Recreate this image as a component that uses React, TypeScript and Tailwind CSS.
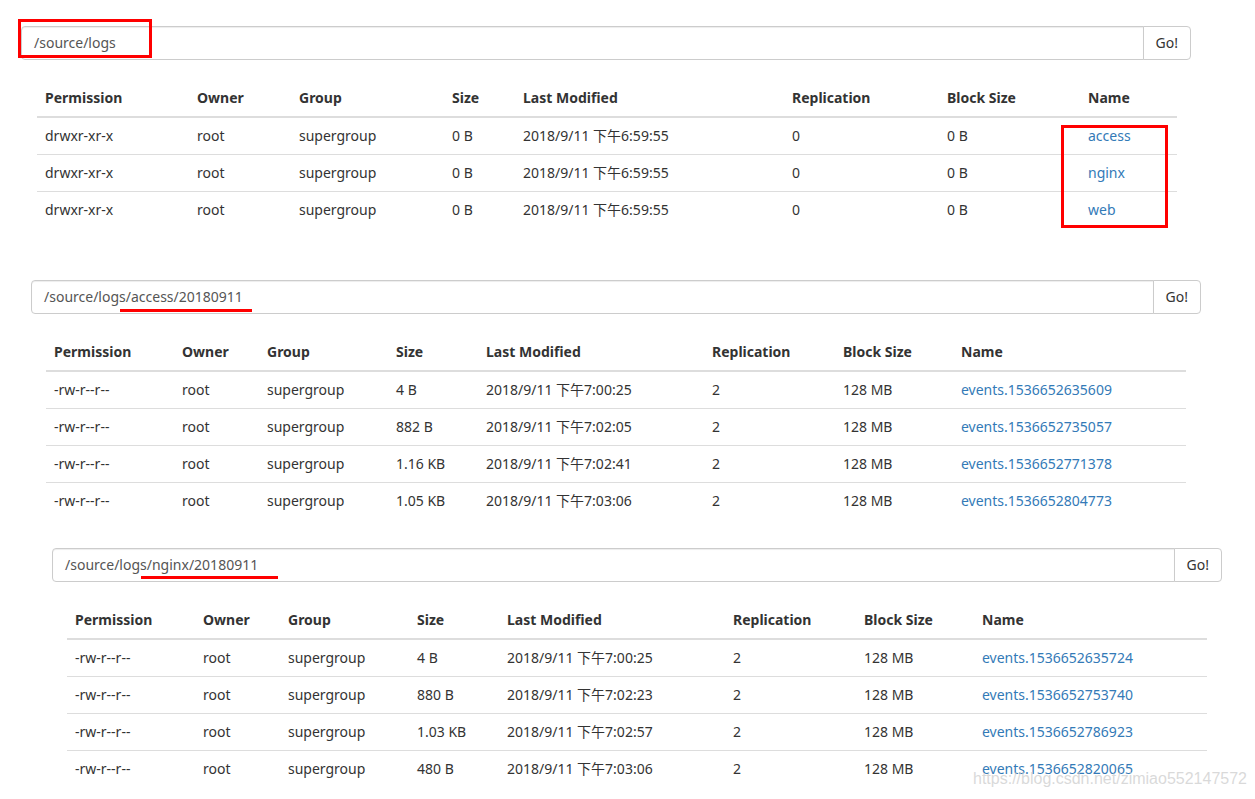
import React from "react";

type Row = string[];

const headers = ["Permission", "Owner", "Group", "Size", "Last Modified", "Replication", "Block Size", "Name"];

const w1 = [152, 102, 153, 71, 269, 155, 141, 97];
const w2 = [128, 85, 129, 90, 226, 131, 118, 233];

const rows1: Row[] = [
  ["drwxr-xr-x", "root", "supergroup", "0 B", "2018/9/11 下午6:59:55", "0", "0 B", "access"],
  ["drwxr-xr-x", "root", "supergroup", "0 B", "2018/9/11 下午6:59:55", "0", "0 B", "nginx"],
  ["drwxr-xr-x", "root", "supergroup", "0 B", "2018/9/11 下午6:59:55", "0", "0 B", "web"],
];

const rows2: Row[] = [
  ["-rw-r--r--", "root", "supergroup", "4 B", "2018/9/11 下午7:00:25", "2", "128 MB", "events.1536652635609"],
  ["-rw-r--r--", "root", "supergroup", "882 B", "2018/9/11 下午7:02:05", "2", "128 MB", "events.1536652735057"],
  ["-rw-r--r--", "root", "supergroup", "1.16 KB", "2018/9/11 下午7:02:41", "2", "128 MB", "events.1536652771378"],
  ["-rw-r--r--", "root", "supergroup", "1.05 KB", "2018/9/11 下午7:03:06", "2", "128 MB", "events.1536652804773"],
];

const rows3: Row[] = [
  ["-rw-r--r--", "root", "supergroup", "4 B", "2018/9/11 下午7:00:25", "2", "128 MB", "events.1536652635724"],
  ["-rw-r--r--", "root", "supergroup", "880 B", "2018/9/11 下午7:02:23", "2", "128 MB", "events.1536652753740"],
  ["-rw-r--r--", "root", "supergroup", "1.03 KB", "2018/9/11 下午7:02:57", "2", "128 MB", "events.1536652786923"],
  ["-rw-r--r--", "root", "supergroup", "480 B", "2018/9/11 下午7:03:06", "2", "128 MB", "events.1536652820065"],
];

function InputGroup({ value }: { value: string }) {
  return (
    <div className="flex h-[34px] w-[1170px]">
      <div className="flex-1 flex items-center border border-[#ccc] rounded-l-[4px] px-[12px] text-[14px] leading-[20px] text-[#555] shadow-[inset_0_1px_1px_rgba(0,0,0,0.075)] bg-white">
        {value}
      </div>
      <div className="-ml-px flex items-center border border-[#ccc] rounded-r-[4px] px-[12px] text-[14px] leading-[20px] text-[#333] bg-white">
        Go!
      </div>
    </div>
  );
}

function Table({ widths, rows }: { widths: number[]; rows: Row[] }) {
  return (
    <table className="table-fixed border-collapse w-[1140px] text-[14px] leading-[20px] text-[#333]">
      <colgroup>
        {widths.map((w, i) => (
          <col key={i} style={{ width: w }} />
        ))}
      </colgroup>
      <thead>
        <tr>
          {headers.map((h) => (
            <th key={h} className="text-left font-bold px-[8px] pt-[8px] pb-[8px] border-b-2 border-[#ddd] align-bottom whitespace-nowrap">
              {h}
            </th>
          ))}
        </tr>
      </thead>
      <tbody>
        {rows.map((r, ri) => (
          <tr key={ri}>
            {r.map((c, ci) => (
              <td
                key={ci}
                className={
                  "px-[8px] pt-[8px] pb-[8px] align-top whitespace-nowrap font-normal " +
                  (ri > 0 ? "border-t border-[#ddd] " : "") +
                  (ci === 7 ? "text-[#337ab7]" : "")
                }
              >
                {c}
              </td>
            ))}
          </tr>
        ))}
      </tbody>
    </table>
  );
}

export default function App() {
  return (
    <div
      className="relative w-[1255px] h-[799px] overflow-hidden bg-white"
      style={{ fontFamily: '"Noto Sans", "Noto Sans CJK SC", sans-serif' }}
    >
      <div className="flex flex-col">
        <div className="pt-[26px] pl-[21px]">
          <InputGroup value="/source/logs" />
        </div>
        <div className="mt-[20px] pl-[37px]">
          <Table widths={w1} rows={rows1} />
        </div>
        <div className="mt-[52px] pl-[31px]">
          <InputGroup value="/source/logs/access/20180911" />
        </div>
        <div className="mt-[20px] pl-[46px]">
          <Table widths={w2} rows={rows2} />
        </div>
        <div className="mt-[29px] pl-[52px]">
          <InputGroup value="/source/logs/nginx/20180911" />
        </div>
        <div className="mt-[20px] pl-[67px]">
          <Table widths={w2} rows={rows3} />
        </div>
      </div>

      {/* annotations */}
      <div className="absolute left-[18px] top-[19px] w-[134px] h-[39px] border-[3px] border-[#f00]" />
      <div className="absolute left-[1061px] top-[125px] w-[107px] h-[103px] border-[3px] border-[#f00]" />
      <div className="absolute left-[120px] top-[309px] w-[132px] h-[3px] bg-[#f00]" />
      <div className="absolute left-[141px] top-[576px] w-[137px] h-[3px] bg-[#f00]" />

      <div
        className="absolute left-[973px] top-[769px] text-[16px] leading-[20px] text-[rgba(205,205,205,0.75)] whitespace-nowrap"
        style={{ fontFamily: '"Liberation Sans", Arial, sans-serif' }}
      >
        https://blog.csdn.net/zimiao552147572
      </div>
    </div>
  );
}
